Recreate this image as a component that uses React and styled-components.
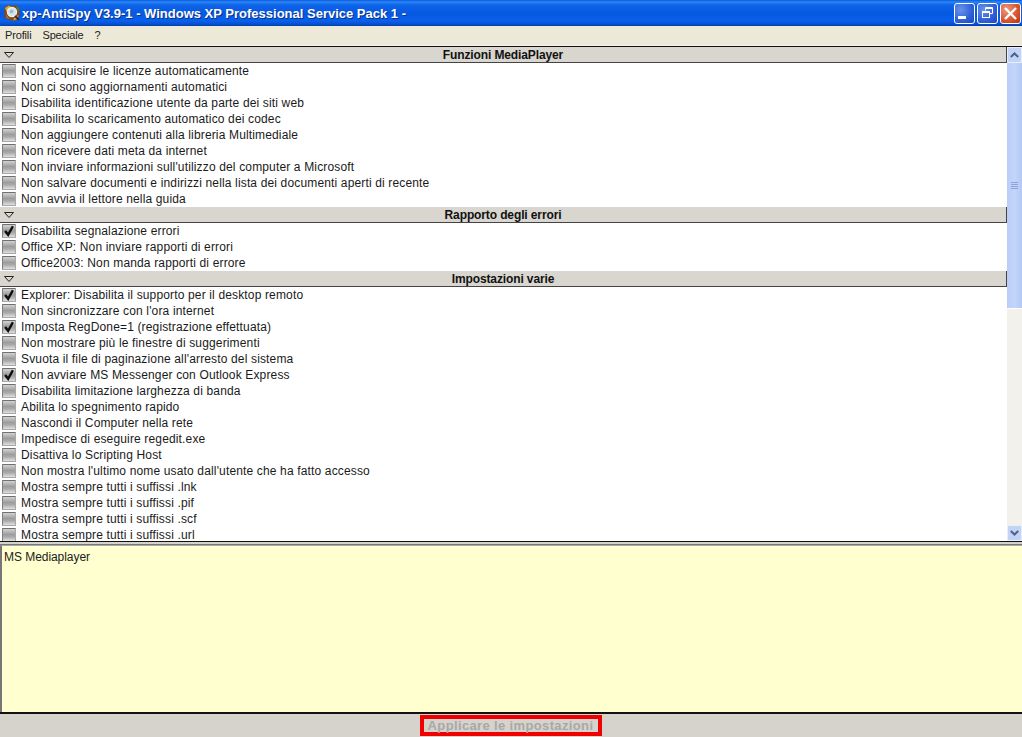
import React from "react";
import styled, { createGlobalStyle } from "styled-components";

const GlobalStyle = createGlobalStyle`
  html, body { margin: 0; padding: 0; height: 100%; overflow: hidden; background: #d6d3cc; }
  #root { height: 100%; }
  * { box-sizing: border-box; }
`;

const sections = [
  {
    title: "Funzioni MediaPlayer",
    items: [
      ["Non acquisire le licenze automaticamente"],
      ["Non ci sono aggiornamenti automatici"],
      ["Disabilita identificazione utente da parte dei siti web"],
      ["Disabilita lo scaricamento automatico dei codec"],
      ["Non aggiungere contenuti alla libreria Multimediale"],
      ["Non ricevere dati meta da internet"],
      ["Non inviare informazioni sull'utilizzo del computer a Microsoft"],
      ["Non salvare documenti e indirizzi nella lista dei documenti aperti di recente"],
      ["Non avvia il lettore nella guida"],
    ],
  },
  {
    title: "Rapporto degli errori",
    items: [
      ["Disabilita segnalazione errori", true],
      ["Office XP: Non inviare rapporti di errori"],
      ["Office2003: Non manda rapporti di errore"],
    ],
  },
  {
    title: "Impostazioni varie",
    items: [
      ["Explorer: Disabilita il supporto per il desktop remoto", true],
      ["Non sincronizzare con l'ora internet"],
      ["Imposta RegDone=1 (registrazione effettuata)", true],
      ["Non mostrare più le finestre di suggerimenti"],
      ["Svuota il file di paginazione all'arresto del sistema"],
      ["Non avviare MS Messenger con Outlook Express", true],
      ["Disabilita limitazione larghezza di banda"],
      ["Abilita lo spegnimento rapido"],
      ["Nascondi il Computer nella rete"],
      ["Impedisce di eseguire regedit.exe"],
      ["Disattiva lo Scripting Host"],
      ["Non mostra l'ultimo nome usato dall'utente che ha fatto accesso"],
      ["Mostra sempre tutti i suffissi .lnk"],
      ["Mostra sempre tutti i suffissi .pif"],
      ["Mostra sempre tutti i suffissi .scf"],
      ["Mostra sempre tutti i suffissi .url"],
    ],
  },
];

const App = () => {
  return (
    <Window>
      <GlobalStyle />
      <TitleBar>
        <AppIcon />
        <TitleText>xp-AntiSpy V3.9-1 - Windows XP Professional Service Pack 1 -</TitleText>
        <WinButtons>
          <WinButton>
            <svg width="21" height="21" viewBox="0 0 21 21">
              <rect x="4" y="13" width="8" height="3" fill="#fff" />
            </svg>
          </WinButton>
          <WinButton>
            <svg width="21" height="21" viewBox="0 0 21 21" fill="none" stroke="#fff">
              <path d="M8.5 7.5V4.5H15.5V10.5H12.5" />
              <path d="M8.5 5.5H15.5" />
              <rect x="5.5" y="8.5" width="7" height="6" />
              <path d="M5.5 9.5H12.5" />
            </svg>
          </WinButton>
          <WinButton $close>
            <svg width="21" height="21" viewBox="0 0 21 21" stroke="#fff" strokeWidth="2.4">
              <path d="M5 5L16 16M16 5L5 16" />
            </svg>
          </WinButton>
        </WinButtons>
      </TitleBar>

      <MenuBar>
        <MenuItem>Profili</MenuItem>
        <MenuItem>Speciale</MenuItem>
        <MenuItem>?</MenuItem>
      </MenuBar>

      <ListArea>
        <List>
          {sections.map((s) => (
            <div key={s.title}>
              <SectionHeader>
                <Arrow>
                  <svg width="10" height="6" viewBox="0 0 10 6" fill="none" stroke="#222">
                    <path d="M0.5 0.5H9.5L5 5.5Z" />
                  </svg>
                </Arrow>
                {s.title}
              </SectionHeader>
              {s.items.map(([label, checked]) => (
                <Row key={label}>
                  <CheckBox>
                    {checked && (
                      <svg width="14" height="14" viewBox="0 0 14 14" fill="none" stroke="#0c0c0c" strokeWidth="2.8">
                        <path d="M2.5 7L6 11.5L11.5 1.5" />
                      </svg>
                    )}
                  </CheckBox>
                  {label}
                </Row>
              ))}
            </div>
          ))}
        </List>
        <ScrollBar>
          <ScrollButton>
            <svg width="9" height="6" viewBox="0 0 9 6" fill="none" stroke="#4d6185" strokeWidth="2">
              <path d="M0.8 5L4.5 1.5L8.2 5" />
            </svg>
          </ScrollButton>
          <ScrollThumb $height={246}>
            <Grip />
            <Grip />
            <Grip />
            <Grip />
          </ScrollThumb>
          <ScrollTrack />
          <ScrollButton>
            <svg width="9" height="6" viewBox="0 0 9 6" fill="none" stroke="#4d6185" strokeWidth="2">
              <path d="M0.8 1L4.5 4.5L8.2 1" />
            </svg>
          </ScrollButton>
        </ScrollBar>
      </ListArea>

      <Splitter />

      <InfoPanel>MS Mediaplayer</InfoPanel>

      <Footer>
        <ApplyButton>Applicare le impostazioni</ApplyButton>
      </Footer>
    </Window>
  );
};

const AppIcon = () => (
  <svg width="18" height="18" viewBox="0 0 18 18" style={{ flex: "none" }}>
    <path d="M2 3L5 1L9 2L13 1L16 4L17 9L15 14L11 17L6 16L2 14L1 8Z" fill="#7a4a22" />
    <path d="M2 4L6 1.5L8 3L3.5 7.5Z" fill="#e0a83c" />
    <path d="M3 10L5 13L7 15L3.5 14Z" fill="#c96a2a" />
    <path d="M12 13L15.5 11L14.5 15L10 16.5Z" fill="#e0a83c" />
    <path d="M13 2L16 4.5L16 8L13.5 4Z" fill="#4f8a3c" />
    <circle cx="9" cy="8" r="4.6" fill="#d6e6ee" stroke="#f2f2ea" strokeWidth="1.2" />
    <circle cx="8.5" cy="7.5" r="2" fill="#9dbccc" />
    <path d="M12 12L16 16" stroke="#3a2a20" strokeWidth="2" />
  </svg>
);

const uiFont = `"Liberation Sans", Arial, sans-serif`;

const Window = styled.div`
  width: 1022px;
  height: 737px;
  display: flex;
  flex-direction: column;
  overflow: hidden;
  font-family: ${uiFont};
  font-size: 12px;
  color: #111;
`;

const TitleBar = styled.div`
  height: 26px;
  flex: none;
  display: flex;
  align-items: center;
  padding: 0 1px 0 3px;
  background: linear-gradient(
    to bottom,
    #0a5be0 0,
    #2a86f5 2px,
    #0f64e8 5px,
    #0558e0 14px,
    #0a60ec 21px,
    #0550d0 24px,
    #0340a8 26px
  );
`;

const TitleText = styled.div`
  flex: 1;
  margin-left: 1px;
  color: #fff;
  font-weight: bold;
  font-size: 13px;
  text-shadow: 1px 1px 0 #0b2f8a;
  white-space: nowrap;
`;

const WinButtons = styled.div`
  display: flex;
  gap: 2px;
`;

const WinButton = styled.div`
  width: 21px;
  height: 21px;
  border: 1px solid #fff;
  border-radius: 3px;
  display: flex;
  align-items: center;
  justify-content: center;
  background: ${(p) =>
    p.$close
      ? "radial-gradient(circle at 30% 30%, #eb9a80, #d8532c 60%, #b8300f)"
      : "radial-gradient(circle at 30% 30%, #6a92ec, #2e5fd8 60%, #1f46b8)"};

  svg {
    flex: none;
    margin: -1px;
  }
`;

const MenuBar = styled.div`
  height: 20px;
  flex: none;
  display: flex;
  align-items: center;
  gap: 11px;
  padding: 0 5px 2px;
  background: #ece9d8;
  font-size: 11px;
  letter-spacing: -0.15px;
  border-bottom: 1px solid #f4f2e6;
`;

const MenuItem = styled.span`
  color: #222;
`;

const ListArea = styled.div`
  height: 496px;
  flex: none;
  display: flex;
  background: #fff;
  border-top: 1px solid #111;
  border-bottom: 1px solid #111;
`;

const List = styled.div`
  flex: 1;
  overflow: hidden;
`;

const SectionHeader = styled.div`
  position: relative;
  height: 16px;
  display: flex;
  align-items: center;
  justify-content: center;
  background: #d8d6cf;
  border-right: 1px solid #444;
  border-bottom: 1px solid #444;
  font-weight: bold;
  font-size: 12px;
  letter-spacing: -0.12px;
  color: #111;
`;

const Arrow = styled.span`
  position: absolute;
  left: 4px;
  top: 5px;
  display: flex;
`;

const Row = styled.div`
  height: 16px;
  display: flex;
  align-items: center;
  gap: 5px;
  padding-left: 2px;
  letter-spacing: 0.15px;
  font-size: 12px;
  white-space: nowrap;
  color: #1a1a1a;
`;

const CheckBox = styled.span`
  width: 14px;
  height: 14px;
  flex: none;
  display: flex;
  align-items: center;
  justify-content: center;
  border: 1px solid #a8a8a8;
  border-top-color: #6f6f6f;
  border-left-color: #7d7d7d;
  border-radius: 1px;
  background: linear-gradient(to bottom, #d2d2d2, #9d9d9d 45%, #a9a9a9 65%, #e0e0e0);
`;

const ScrollBar = styled.div`
  width: 15px;
  flex: none;
  display: flex;
  flex-direction: column;
  background: #f3f1ec;
`;

const ScrollButton = styled.div`
  height: 16px;
  flex: none;
  display: flex;
  align-items: center;
  justify-content: center;
  background: #c3d3f8;
  border: 1px solid #e8eefc;
  border-radius: 2px;
`;

const ScrollThumb = styled.div`
  height: ${(p) => p.$height}px;
  flex: none;
  display: flex;
  flex-direction: column;
  align-items: center;
  justify-content: center;
  gap: 1px;
  background: linear-gradient(to right, #b9cdf7, #c4d5fb 50%, #b4c8f5);
  border-bottom: 1px solid #fff;
`;

const Grip = styled.span`
  width: 7px;
  height: 1px;
  background: #8aa5dd;
`;

const ScrollTrack = styled.div`
  flex: 1;
`;

const Splitter = styled.div`
  height: 3px;
  flex: none;
  background: #d6d3cc;
  border-bottom: 1px solid #777;
`;

const InfoPanel = styled.div`
  height: 167px;
  flex: none;
  padding: 4px 0 0 2px;
  background: #ffffcf;
  border-left: 2px solid #777;
  border-top: 1px solid #aaa;
  font-size: 12px;
  letter-spacing: -0.05px;
  color: #222;
`;

const Footer = styled.div`
  flex: 1;
  display: flex;
  justify-content: center;
  align-items: flex-start;
  padding: 1px 0 0 0;
  border-top: 2px solid #111;
  background: #d6d3cc;
`;

const ApplyButton = styled.div`
  width: 182px;
  height: 21px;
  margin-left: -1px;
  display: flex;
  align-items: center;
  justify-content: center;
  border: 4px solid #f00000;
  background: #d6d3cc;
  color: #a8a8a8;
  font-weight: bold;
  font-size: 13px;
  letter-spacing: 0.36px;
  white-space: nowrap;
`;

export default App;
